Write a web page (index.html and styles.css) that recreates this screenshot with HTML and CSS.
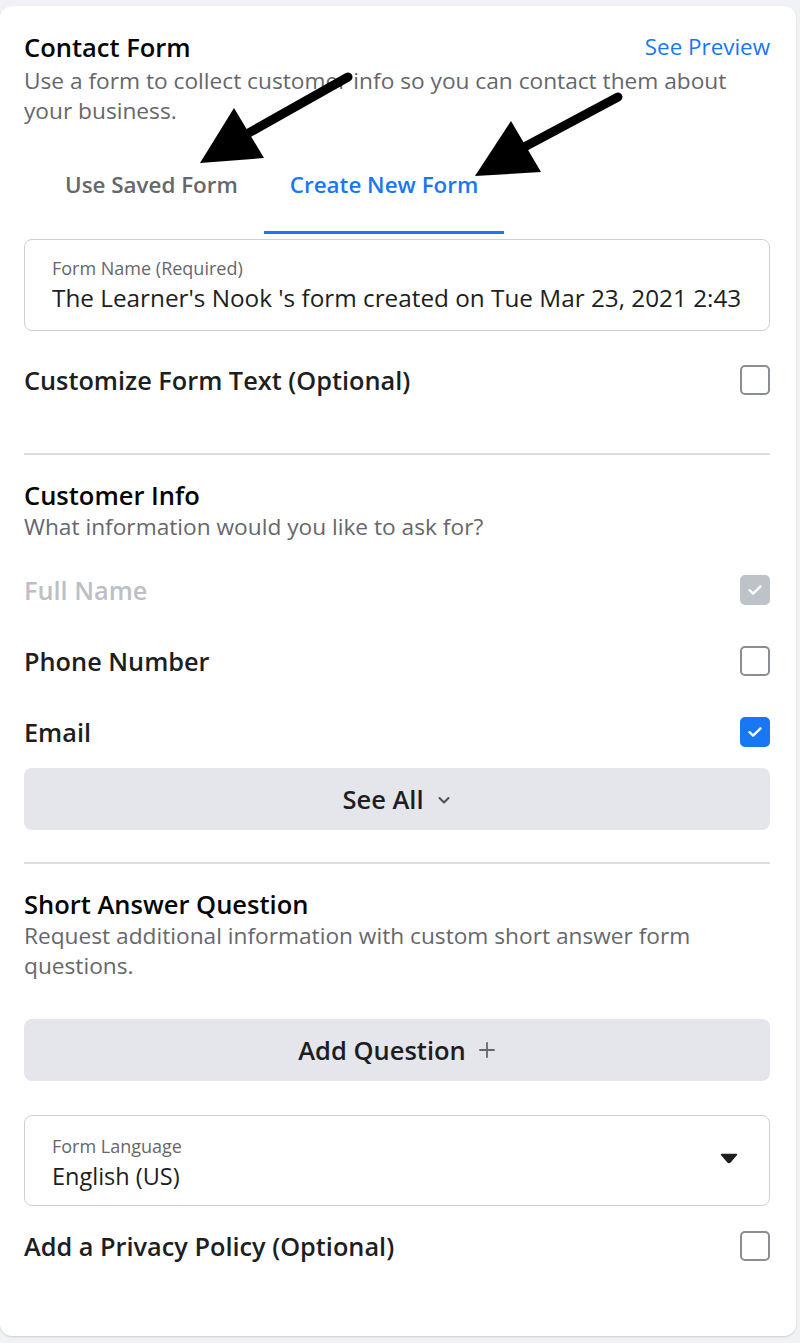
FILE: index.html
```html
<!DOCTYPE html>
<html lang="en">
<head>
<meta charset="utf-8">
<title>Contact Form</title>
<link rel="stylesheet" href="styles.css">
</head>
<body>
<div class="page">
  <div class="card">
    <div class="header">
      <div class="title">Contact Form</div>
      <a class="link" href="#">See Preview</a>
    </div>
    <p class="desc">Use a form to collect customer info so you can contact them about your business.</p>

    <div class="tabs">
      <div class="tab">Use Saved Form</div>
      <div class="tab active">Create New Form</div>
    </div>

    <div class="field field-name">
      <div class="field-label">Form Name (Required)</div>
      <div class="field-value">The Learner's Nook 's form created on Tue Mar 23, 2021 2:43pm</div>
    </div>

    <div class="row row-customize">
      <span class="row-label">Customize Form Text (Optional)</span>
      <span class="cb"></span>
    </div>

    <hr class="divider divider-1">

    <div class="title section-title">Customer Info</div>
    <p class="desc">What information would you like to ask for?</p>

    <div class="row row-first">
      <span class="row-label disabled">Full Name</span>
      <span class="cb cb-disabled"><svg viewBox="0 0 20 20" width="20" height="20"><path d="M4.5 10.2l3.6 3.4 7.4-7.2" fill="none" stroke="#fff" stroke-width="2.4" stroke-linecap="round" stroke-linejoin="round"/></svg></span>
    </div>
    <div class="row">
      <span class="row-label">Phone Number</span>
      <span class="cb"></span>
    </div>
    <div class="row">
      <span class="row-label">Email</span>
      <span class="cb cb-checked"><svg viewBox="0 0 20 20" width="20" height="20"><path d="M4.5 10.2l3.6 3.4 7.4-7.2" fill="none" stroke="#fff" stroke-width="2.4" stroke-linecap="round" stroke-linejoin="round"/></svg></span>
    </div>

    <button class="btn btn-seeall">See All <svg class="chev" viewBox="0 0 16 16" width="16" height="16"><path d="M3.5 6l4.5 4.5L12.5 6" fill="none" stroke="#4b4f56" stroke-width="2" stroke-linecap="round" stroke-linejoin="round"/></svg></button>

    <hr class="divider divider-2">

    <div class="title section-title">Short Answer Question</div>
    <p class="desc">Request additional information with custom short answer form questions.</p>

    <button class="btn btn-add">Add Question <svg class="plus" viewBox="0 0 18 18" width="18" height="18"><path d="M9 2v14M2 9h14" fill="none" stroke="#65676b" stroke-width="1.8" stroke-linecap="round"/></svg></button>

    <div class="field field-lang">
      <div class="field-text">
        <div class="field-label">Form Language</div>
        <div class="field-value">English (US)</div>
      </div>
      <svg class="caret" viewBox="0 0 18 11" width="18" height="11"><path d="M1.5 1.5h15l-6.4 7.6a1.5 1.5 0 0 1-2.2 0z" fill="#1c1e21" stroke="#1c1e21" stroke-width="1.5" stroke-linejoin="round"/></svg>
    </div>

    <div class="row row-privacy">
      <span class="row-label">Add a Privacy Policy (Optional)</span>
      <span class="cb"></span>
    </div>
  </div>

  <svg class="arrows" viewBox="0 0 800 1343" width="800" height="1343">
    <line x1="348" y1="77" x2="238" y2="139" stroke="#000" stroke-width="9" stroke-linecap="round"/>
    <polygon points="200,163 234,108 264,158" fill="#000"/>
    <line x1="618" y1="97" x2="515" y2="152" stroke="#000" stroke-width="9" stroke-linecap="round"/>
    <polygon points="475,176 511,121 541,172" fill="#000"/>
  </svg>
</div>
</body>
</html>
```

FILE: styles.css
```css
* { box-sizing: border-box; }

html, body {
  margin: 0;
  padding: 0;
  background: #f0f2f5;
}

body {
  font-family: "Open Sans", "Noto Sans", "Liberation Sans", sans-serif;
  color: #1c1e21;
}

.page {
  position: relative;
  width: 800px;
  height: 1343px;
  padding-top: 6px;
}

.card {
  width: 796px;
  background: #fff;
  border-radius: 12px;
  box-shadow: 0 1px 2px rgba(0, 0, 0, 0.15);
  padding: 25px 26px 75px 24px;
}

.header {
  display: flex;
  justify-content: space-between;
  align-items: center;
}

.title {
  font-size: 25.5px;
  font-weight: 600;
  line-height: 32px;
  color: #050505;
}

.link {
  font-size: 22.4px;
  line-height: 32px;
  color: #1877f2;
  text-decoration: none;
}

.desc {
  margin: 3px 0 0;
  font-size: 22.7px;
  line-height: 30px;
  color: #65676b;
}

.section-title + .desc {
  margin-top: 1px;
}

.tabs {
  display: flex;
  margin: 20px 0 0 15px;
}

.tab {
  padding: 24px 26px 31px;
  border-bottom: 3px solid transparent;
  font-size: 22.4px;
  font-weight: 600;
  line-height: 30px;
  color: #65676b;
}

.tab.active {
  color: #1877f2;
  border-bottom-color: #1877f2;
}

.field {
  border: 1px solid #ccd0d5;
  border-radius: 8px;
  padding: 16px 26px 17px 27px;
}

.field-name {
  margin-top: 5px;
}

.field-label {
  font-size: 18px;
  line-height: 24px;
  color: #65676b;
}

.field-value {
  margin-top: 3px;
  font-size: 23.5px;
  line-height: 30px;
  color: #1c1e21;
  white-space: nowrap;
  overflow: hidden;
}

.field-name .field-value {
  font-size: 24.3px;
}

.field-lang {
  margin-top: 34px;
  display: flex;
  align-items: center;
  justify-content: space-between;
  padding: 18px 31px 14px 27px;
}

.caret {
  margin-top: -9px;
}

.row {
  display: flex;
  justify-content: space-between;
  align-items: center;
  height: 30px;
  margin-top: 41px;
}

.row-customize { margin-top: 34px; }
.row-first { margin-top: 33px; }
.row-privacy { margin-top: 25px; }

.row-label {
  font-size: 25.3px;
  font-weight: 600;
  line-height: 30px;
  color: #1c1e21;
}

.row-label.disabled {
  color: #bcc0c4;
}

.cb {
  width: 30px;
  height: 30px;
  border: 2px solid #8a8d91;
  border-radius: 5px;
  display: flex;
  align-items: center;
  justify-content: center;
  background: #fff;
}

.cb-checked {
  background: #1877f2;
  border-color: #1877f2;
}

.cb-disabled {
  background: #bec3c9;
  border-color: #bec3c9;
}

.divider {
  border: 0;
  height: 2px;
  background: #dadde1;
  margin: 0;
}

.divider-1 { margin-top: 58px; }
.divider-2 { margin-top: 32px; }

.divider + .section-title {
  margin-top: 24px;
}

.btn {
  display: flex;
  align-items: center;
  justify-content: center;
  gap: 12px;
  width: 100%;
  height: 62px;
  border: 0;
  border-radius: 8px;
  background: #e4e6eb;
  font-family: inherit;
  font-size: 25.5px;
  font-weight: 600;
  color: #1c1e21;
  padding: 0;
}

.btn-seeall { margin-top: 21px; }
.btn-add { margin-top: 38px; }

.chev { margin-top: 2px; }

.arrows {
  position: absolute;
  top: 0;
  left: 0;
  pointer-events: none;
}
```
